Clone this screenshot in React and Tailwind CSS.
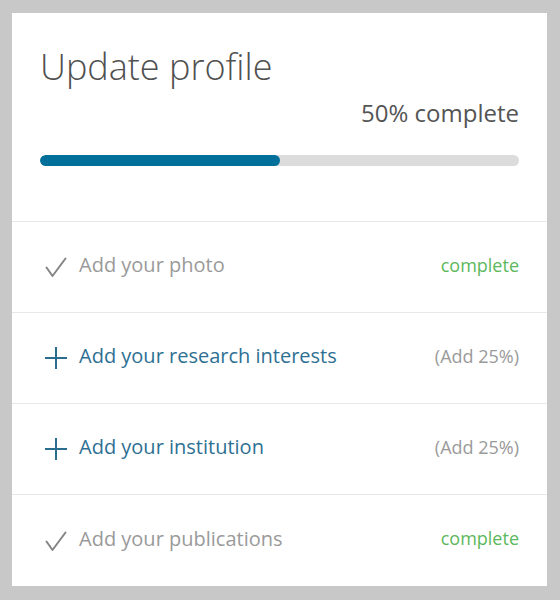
import React from "react";

const items = [
  { label: "Add your photo", done: true },
  { label: "Add your research interests", done: false },
  { label: "Add your institution", done: false },
  { label: "Add your publications", done: true },
];

function CheckIcon() {
  return (
    <svg width="22" height="22" viewBox="0 0 22 22" fill="none" className="shrink-0">
      <path d="M1.5 11.5 L7.5 20 L20.5 2.5" stroke="#858585" strokeWidth="2" strokeLinecap="round" strokeLinejoin="round" />
    </svg>
  );
}

function PlusIcon() {
  return (
    <svg width="22" height="22" viewBox="0 0 22 22" fill="none" className="shrink-0">
      <path d="M11 0 V22 M0 11 H22" stroke="#2b6d8f" strokeWidth="2" />
    </svg>
  );
}

export default function App() {
  const percent = 50;

  return (
    <div
      className="w-[560px] h-[600px] bg-[#c8c8c8] pt-[13px] pl-[12px] pr-[13px] pb-[14px]"
      style={{ fontFamily: "'Open Sans', Lato, sans-serif" }}
    >
      <div className="bg-white h-full flex flex-col">
        {/* HEADER */}
        <div className="px-[28px] pt-[36px] h-[209px] border-b border-[#e8e8e8]">
          <h1 className="text-[36px] leading-none font-light text-[#505050]">Update profile</h1>
          <div className="text-right text-[24px] leading-none text-[#555] mt-[16px]">50% complete</div>
          <div className="mt-[30px] h-[11px] rounded-full bg-[#dcdcdc] overflow-hidden">
            <div className="h-full rounded-full bg-[#00709a]" style={{ width: `${percent}%` }} />
          </div>
        </div>

        {/* ITEMS */}
        {items.map((item, i) => (
          <div
            key={item.label}
            className={
              "flex items-center justify-between pl-[33px] pr-[28px] h-[91px] " +
              (i < items.length - 1 ? "border-b border-[#e8e8e8]" : "")
            }
          >
            <div className="flex items-center gap-[12px]">
              {item.done ? <CheckIcon /> : <PlusIcon />}
              <span className={"text-[20px] pb-[4px] " + (item.done ? "text-[#9a9a9a]" : "text-[#2e7093]")}>
                {item.label}
              </span>
            </div>
            {item.done ? (
              <span className="text-[18px] pb-[4px] text-[#5cb85c]">complete</span>
            ) : (
              <span className="text-[18px] pb-[4px] text-[#9a9a9a]">(Add 25%)</span>
            )}
          </div>
        ))}
      </div>
    </div>
  );
}
